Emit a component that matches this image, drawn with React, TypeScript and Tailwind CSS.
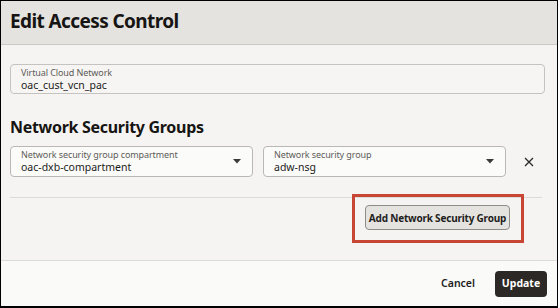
import React from "react";

const font = { fontFamily: '"Noto Sans", "Open Sans", Arial, sans-serif' };

function Caret() {
  return (
    <svg width="8" height="5" viewBox="0 0 8 5" className="shrink-0">
      <path d="M0 0 L8 0 L4 4.5 Z" fill="#3a3a3a" />
    </svg>
  );
}

function Select({ label, value, className }: { label: string; value: string; className: string }) {
  return (
    <div className={`h-[31px] rounded-[4px] border border-[#b9b8b5] bg-[#fbfbfa] flex items-center pl-[10px] pr-[11px] ${className}`}>
      <div className="flex-1 flex flex-col gap-[1px]">
        <span className="text-[9px] text-[#5d5b58] leading-[10px] tracking-[-0.1px]">{label}</span>
        <span className="text-[10.5px] text-[#1c1b19] leading-[12px]">{value}</span>
      </div>
      <Caret />
    </div>
  );
}

export default function App() {
  return (
    <div className="w-[560px] h-[308px] bg-white" style={font}>
      <div className="relative w-[558px] h-[308px] border-l border-t border-r border-b-2 border-black flex flex-col">
        <div className="h-[44px] shrink-0 bg-[#e4e3df] border-b border-[#cac9c5] pl-[9px] flex items-center">
          <h1 className="text-[19px] font-bold text-[#161513] tracking-[-0.6px] leading-none -mt-[2px]">Edit Access Control</h1>
        </div>
        <div className="flex-1 bg-[#f5f4f2] pl-[9px] pr-[12px] pt-[19px] flex flex-col">
          <div className="h-[30px] rounded-[4px] border border-[#c4c3c0] bg-[#f6f5f3] pl-[10px] flex flex-col justify-center gap-[1px]">
            <span className="text-[9px] text-[#5d5b58] leading-[10px] tracking-[-0.1px]">Virtual Cloud Network</span>
            <span className="text-[10.5px] text-[#1c1b19] leading-[12px]">oac_cust_vcn_pac</span>
          </div>
          <h2 className="mt-[23px] text-[16px] font-bold text-[#161513] leading-[20px] tracking-[-0.3px]">Network Security Groups</h2>
          <div className="mt-[9px] flex items-center">
            <Select label="Network security group compartment" value="oac-dxb-compartment" className="w-[243px]" />
            <Select label="Network security group" value="adw-nsg" className="ml-[10px] w-[243px]" />
            <div className="ml-[17px] w-[12px] h-[12px] flex items-center justify-center">
              <svg width="10" height="10" viewBox="0 0 10 10">
                <path d="M1 1 L9 9 M9 1 L1 9" stroke="#2a2927" strokeWidth="1.3" />
              </svg>
            </div>
          </div>
          <div className="mt-[20px] h-px bg-[#dcdbd8] mr-[3px]" />
          <div className="mt-[7px] flex justify-end pr-[35px]">
            <button className="w-[145px] h-[25px] rounded-[4px] border border-[#8d8c89] bg-[#e4e3e0] text-[10px] font-bold text-[#1f1e1c] leading-none whitespace-nowrap tracking-[-0.2px]">
              Add Network Security Group
            </button>
          </div>
        </div>
        <div className="h-[46px] shrink-0 bg-[#fafaf9] border-t border-[#dcdbd8] flex items-center justify-end pr-[10px] pt-[1px]">
          <span className="text-[10.5px] font-semibold text-[#1f1e1c] mr-[20px]">Cancel</span>
          <button className="w-[52px] h-[26px] rounded-[4px] bg-[#2b2826] text-white text-[10.5px] font-bold">Update</button>
        </div>
        <div className="absolute left-[351px] top-[193px] w-[172px] h-[49px] border-[3px] border-[#c74634]" />
      </div>
    </div>
  );
}
